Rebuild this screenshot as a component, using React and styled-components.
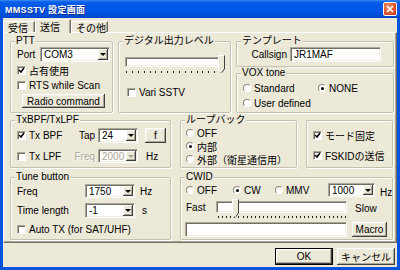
import React from 'react'
import styled, { createGlobalStyle } from 'styled-components'

const GlobalStyle = createGlobalStyle`
  html, body { margin: 0; padding: 0; }
  body {
    font-family: "Liberation Sans", "Noto Sans CJK JP", sans-serif;
    font-size: 10px;
    color: #000;
  }
  * { box-sizing: border-box; }
`

const Window = styled.div`
  width: 400px;
  height: 270px;
  display: flex;
  flex-direction: column;
  background: #0653e0;
  overflow: hidden;
`

const TitleBar = styled.div`
  height: 18px;
  flex: none;
  display: flex;
  align-items: center;
  padding: 0 3px 0 5px;
  background: linear-gradient(180deg, #3b8cf5 0, #0a5fe8 2px, #0058e6 5px, #0055e5 11px, #004fd9 15px, #0046cb 18px);
  color: #fff;
  font-size: 9px;
  font-weight: bold;
  letter-spacing: 0.3px;
  text-shadow: 1px 1px 0 #0b2b8e;
`

const CloseBtn = styled.div`
  margin-left: auto;
  width: 14px;
  height: 14px;
  border: 1px solid #fff;
  border-radius: 2px;
  background: radial-gradient(circle at 35% 30%, #f0906b, #e0552d 55%, #c2381a);
  display: flex;
  align-items: center;
  justify-content: center;
`

const Body = styled.div`
  flex: 1;
  min-height: 0;
  margin: 0 3px 3px;
  background: #ece9d8;
  display: flex;
  flex-direction: column;
`

const TabRow = styled.div`
  height: 14px;
  flex: none;
  display: flex;
  align-items: flex-end;
`

const Tab = styled.div`
  position: relative;
  z-index: 1;
  width: ${p => p.$w}px;
  height: ${p => (p.$active ? 14 : 11)}px;
  margin-bottom: ${p => (p.$active ? -1 : 0)}px;
  padding-left: 4px;
  display: flex;
  align-items: center;
  background: #ece9d8;
  border-top: 1px solid #fff;
  border-left: 1px solid #fff;
  border-right: 1px solid #716f64;
  box-shadow: inset -1px 0 0 #aca899;
  white-space: nowrap;
`

const Panel = styled.div`
  height: 211px;
  flex: none;
  position: relative;
  border: 1px solid;
  border-color: #fff #716f64 #716f64 #fff;
  box-shadow: inset -1px -1px 0 #aca899;
  padding: 2px 3px 0 6px;
  display: flex;
  flex-direction: column;
`

const Row = styled.div`
  display: flex;
  height: ${p => p.$h}px;
  margin-top: ${p => p.$mt || 0}px;
  gap: ${p => p.$gap}px;
  flex: none;
`

const Column = styled.div`
  display: flex;
  flex-direction: column;
  width: ${p => p.$w}px;
  flex: none;
`

const Group = styled.div`
  position: relative;
  margin-top: 6px;
  width: ${p => (p.$w ? p.$w + 'px' : 'auto')};
  height: ${p => (p.$h ? p.$h + 'px' : 'auto')};
  flex: ${p => (p.$grow ? 1 : 'none')};
  border: 1px solid #c3c0b0;
  border-radius: 2px;
  box-shadow: inset 1px 1px 0 #fff, 1px 1px 0 #fff;
`

const Legend = styled.span`
  position: absolute;
  top: -7px;
  left: 4px;
  padding: 0 1px;
  background: #ece9d8;
  line-height: 12px;
  white-space: nowrap;
`

const Stack = styled.div`
  display: flex;
  flex-direction: column;
  padding: ${p => p.$pad};
  gap: ${p => p.$gap || 0}px;
`

const Line = styled.div`
  display: flex;
  align-items: ${p => p.$align || 'center'};
  height: ${p => (p.$h ? p.$h + 'px' : 'auto')};
  margin-top: ${p => p.$mt || 0}px;
  margin-left: ${p => p.$ml || 0}px;
  gap: ${p => p.$gap || 0}px;
  justify-content: ${p => p.$justify || 'flex-start'};
  padding: ${p => p.$pad || 0};
`

const FormGrid = styled.div`
  display: grid;
  grid-template-columns: ${p => p.$cols};
  grid-template-rows: ${p => p.$rows};
  row-gap: ${p => p.$rowGap}px;
  align-items: center;
  padding: ${p => p.$pad};
`

const Text = styled.span`
  white-space: nowrap;
  width: ${p => (p.$w ? p.$w + 'px' : 'auto')};
  flex: none;
  margin-top: ${p => p.$mt || 0}px;
  margin-left: ${p => p.$ml || 0}px;
  text-align: ${p => p.$right ? 'right' : 'left'};
  padding-right: ${p => p.$pr || 0}px;
  padding-left: ${p => p.$pl || 0}px;
  color: ${p => (p.$disabled ? '#aca899' : '#000')};
  text-shadow: ${p => (p.$disabled ? '1px 1px 0 #fff' : 'none')};
`

const Span = styled.div`
  grid-column: 1 / -1;
`

const CheckRow = styled.div`
  display: flex;
  align-items: center;
  gap: 3px;
  height: 12px;
  margin-left: ${p => p.$ml || 0}px;
  margin-top: ${p => p.$mt || 0}px;
  white-space: nowrap;
`

const CheckBox = styled.span`
  width: 9px;
  height: 9px;
  flex: none;
  background: #fff;
  border: 1px solid;
  border-color: #aca899 #fff #fff #aca899;
  box-shadow: inset 1px 1px 0 #716f64;
  display: flex;
  align-items: center;
  justify-content: center;
`

const RadioCircle = styled.span`
  width: 8px;
  height: 8px;
  flex: none;
  border-radius: 50%;
  background: #fff;
  border: 1px solid;
  border-color: #8c8a7e #fff #fff #8c8a7e;
  display: flex;
  align-items: center;
  justify-content: center;
  &::after {
    content: '';
    width: 3px;
    height: 3px;
    border-radius: 50%;
    background: ${p => (p.$on ? '#000' : 'transparent')};
  }
`

const RadioRow = styled.div`
  display: flex;
  align-items: center;
  gap: 3px;
  height: 12px;
  width: ${p => (p.$w ? p.$w + 'px' : 'auto')};
  flex: none;
  white-space: nowrap;
`

const Field = styled.div`
  width: ${p => p.$w}px;
  height: ${p => p.$h || 15}px;
  flex: none;
  display: flex;
  align-items: center;
  padding: 1px;
  background: #fff;
  border: 1px solid;
  border-color: #aca899 #fff #fff #aca899;
  box-shadow: inset 1px 1px 0 #716f64, inset -1px -1px 0 #f1efe2;
  margin-left: ${p => p.$ml || 0}px;
`

const FieldText = styled.span`
  flex: 1;
  padding-left: ${p => p.$pl || 2}px;
  white-space: nowrap;
  overflow: hidden;
  color: ${p => (p.$disabled ? '#aca899' : '#000')};
`

const DropBtn = styled.span`
  width: 10px;
  align-self: stretch;
  flex: none;
  background: #ece9d8;
  box-shadow: inset -1px -1px 0 #404040, inset 1px 1px 0 #fff, inset -2px -2px 0 #aca899;
  display: flex;
  align-items: center;
  justify-content: center;
  &::after {
    content: '';
    border-left: 3px solid transparent;
    border-right: 3px solid transparent;
    border-top: 3px solid ${p => (p.$disabled ? '#aca899' : '#000')};
    margin-left: -1px;
  }
`

const Button = styled.div`
  width: ${p => p.$w}px;
  height: ${p => p.$h}px;
  flex: none;
  display: flex;
  align-items: center;
  justify-content: center;
  margin-left: ${p => p.$ml || 0}px;
  background: #ece9d8;
  border: ${p => (p.$default ? '1px solid #000' : 'none')};
  box-shadow: inset -1px -1px 0 #404040, inset 1px 1px 0 #fff, inset -2px -2px 0 #aca899, inset 2px 2px 0 #f1efe2;
  white-space: nowrap;
`

const SliderBox = styled.div`
  position: relative;
  width: ${p => p.$w}px;
  height: 19px;
  flex: none;
`

const Track = styled.div`
  margin: 2px 3px 0 0;
  height: ${p => p.$h}px;
  background: #fff;
  border: 1px solid;
  border-color: #aca899 #fff #fff #aca899;
  box-shadow: inset 1px 1px 0 #716f64, inset -1px -1px 0 #f1efe2;
`

const TickRow = styled.div`
  display: flex;
  justify-content: space-between;
  margin: ${p => p.$mt}px 4px 0 ${p => p.$ml}px;
`

const Tick = styled.span`
  width: 1px;
  height: 2px;
  background: #222;
`

const Thumb = styled.svg`
  position: absolute;
  top: 0;
`

const Footer = styled.div`
  flex: 1;
  display: flex;
  justify-content: flex-end;
  align-items: flex-start;
  gap: 4px;
  padding: 5px 2px 0 0;
`

function Check({ checked, children, ml, mt }) {
  return (
    <CheckRow $ml={ml} $mt={mt}>
      <CheckBox>
        {checked && (
          <svg width="7" height="7" viewBox="0 0 7 7">
            <path d="M1 3 L3 5 L6 1" stroke="#000" strokeWidth="1.5" fill="none" />
          </svg>
        )}
      </CheckBox>
      <span>{children}</span>
    </CheckRow>
  )
}

function Radio({ on, children, w }) {
  return (
    <RadioRow $w={w}>
      <RadioCircle $on={on} />
      <span>{children}</span>
    </RadioRow>
  )
}

function Combo({ value, w, h, disabled }) {
  return (
    <Field $w={w} $h={h}>
      <FieldText $disabled={disabled}>{value}</FieldText>
      <DropBtn $disabled={disabled} />
    </Field>
  )
}

function Slider({ w, trackH, value, ticks, tickTop, tickLeft }) {
  return (
    <SliderBox $w={w}>
      <Track $h={trackH} />
      <TickRow $mt={tickTop} $ml={tickLeft}>
        {Array.from({ length: ticks }).map((_, i) => <Tick key={i} />)}
      </TickRow>
      <Thumb width="7" height="19" viewBox="0 0 7 19" style={{ left: value }}>
        <polygon points="0,0 7,0 7,14 3.5,18.5 0,14" fill="#ece9d8" />
        <polyline points="0.5,14 0.5,0.5 6.5,0.5" stroke="#fff" fill="none" />
        <polyline points="6.5,0.5 6.5,14 3.5,18" stroke="#404040" fill="none" />
        <polyline points="0.5,14 3.5,18" stroke="#fff" fill="none" />
      </Thumb>
    </SliderBox>
  )
}

export default function App() {
  return (
    <>
      <GlobalStyle />
      <Window>
        <TitleBar>
          <span>MMSSTV 設定画面</span>
          <CloseBtn>
            <svg width="8" height="8" viewBox="0 0 8 8">
              <path d="M1 1 L7 7 M7 1 L1 7" stroke="#fff" strokeWidth="1.7" />
            </svg>
          </CloseBtn>
        </TitleBar>
        <Body>
          <TabRow>
            <Tab $w={32}>受信</Tab>
            <Tab $w={36} $active>送信</Tab>
            <Tab $w={37}>その他</Tab>
          </TabRow>
          <Panel>
            <Row $h={78} $gap={5}>
              <Group $w={103}>
                <Legend>PTT</Legend>
                <Stack $pad="5px 0 0 6px">
                  <Line $h={15}>
                    <Text $w={23}>Port</Text>
                    <Combo value="COM3" w={70} />
                  </Line>
                  <Check checked mt={2}>占有使用</Check>
                  <Check mt={3}>RTS while Scan</Check>
                  <Line $mt={3} $ml={5}>
                    <Button $w={83} $h={14}>Radio command</Button>
                  </Line>
                </Stack>
              </Group>
              <Group $w={113}>
                <Legend>デジタル出力レベル</Legend>
                <Stack $pad="13px 0 0 6px">
                  <Slider w={100} trackH={10} value={93} ticks={17} tickTop={4} tickLeft={1} />
                  <Check ml={2} mt={12}>Vari SSTV</Check>
                </Stack>
              </Group>
              <Column $w={158}>
                <Group $h={26}>
                  <Legend>テンプレート</Legend>
                  <Line $justify="flex-end" $gap={3} $pad="5px 12px 0 0" $h={20}>
                    <Text>Callsign</Text>
                    <Field $w={91}>
                      <FieldText>JR1MAF</FieldText>
                    </Field>
                  </Line>
                </Group>
                <Group $grow>
                  <Legend>VOX tone</Legend>
                  <FormGrid $cols="75px auto" $rows="12px 12px" $rowGap={3} $pad="8px 0 0 6px">
                    <Radio>Standard</Radio>
                    <Radio on>NONE</Radio>
                    <Radio>User defined</Radio>
                  </FormGrid>
                </Group>
              </Column>
            </Row>

            <Row $h={54} $mt={1} $gap={9}>
              <Group $w={161}>
                <Legend>TxBPF/TxLPF</Legend>
                <FormGrid $cols="53px 28px 47px 21px" $rows="15px 14px" $rowGap={6} $pad="7px 0 0 6px">
                  <Check checked>Tx BPF</Check>
                  <Text $right $pr={3}>Tap</Text>
                  <Combo value="24" w={40} />
                  <Button $w={21} $h={15}>f</Button>
                  <Check>Tx LPF</Check>
                  <Text $right $pr={3} $disabled>Freq</Text>
                  <Combo value="2000" w={40} h={14} disabled />
                  <Text $pl={1}>Hz</Text>
                </FormGrid>
              </Group>
              <Group $w={117}>
                <Legend>ループバック</Legend>
                <Stack $pad="6px 0 0 5px" $gap={1}>
                  <Radio>OFF</Radio>
                  <Radio on>内部</Radio>
                  <Radio>外部（衛星通信用）</Radio>
                </Stack>
              </Group>
              <Group $w={87}>
                <Stack $pad="8px 0 0 6px" $gap={8}>
                  <Check checked>モード固定</Check>
                  <Check checked>FSKIDの送信</Check>
                </Stack>
              </Group>
            </Row>

            <Row $h={69} $mt={3} $gap={9}>
              <Group $w={161}>
                <Legend>Tune button</Legend>
                <FormGrid $cols="68px 50px auto" $rows="14px 15px 12px" $rowGap={5} $pad="6px 0 0 6px">
                  <Text>Freq</Text>
                  <Combo value="1750" w={50} h={14} />
                  <Text $pl={5}>Hz</Text>
                  <Text>Time length</Text>
                  <Combo value="-1" w={50} />
                  <Text $pl={7}>s</Text>
                  <Span>
                    <Check>Auto TX (for SAT/UHF)</Check>
                  </Span>
                </FormGrid>
              </Group>
              <Group $grow>
                <Legend>CWID</Legend>
                <Stack $pad="5px 0 0 5px">
                  <Line $h={14}>
                    <Radio w={47}>OFF</Radio>
                    <Radio w={42} on>CW</Radio>
                    <Radio w={53}>MMV</Radio>
                    <Combo value="1000" w={47} h={14} />
                    <Text $ml={5} $mt={4}>Hz</Text>
                  </Line>
                  <Line $mt={2} $align="flex-start">
                    <Text $w={30} $mt={3}>Fast</Text>
                    <Slider w={134} trackH={12} value={16} ticks={32} tickTop={3} tickLeft={2} />
                    <Text $ml={5} $mt={4}>Slow</Text>
                  </Line>
                  <Line $mt={4} $gap={5}>
                    <Field $w={162} $ml={-1} />
                    <Button $w={35} $h={15}>Macro</Button>
                  </Line>
                </Stack>
              </Group>
            </Row>
          </Panel>
          <Footer>
            <Button $w={58} $h={17} $default>OK</Button>
            <Button $w={58} $h={17}>キャンセル</Button>
          </Footer>
        </Body>
      </Window>
    </>
  )
}
